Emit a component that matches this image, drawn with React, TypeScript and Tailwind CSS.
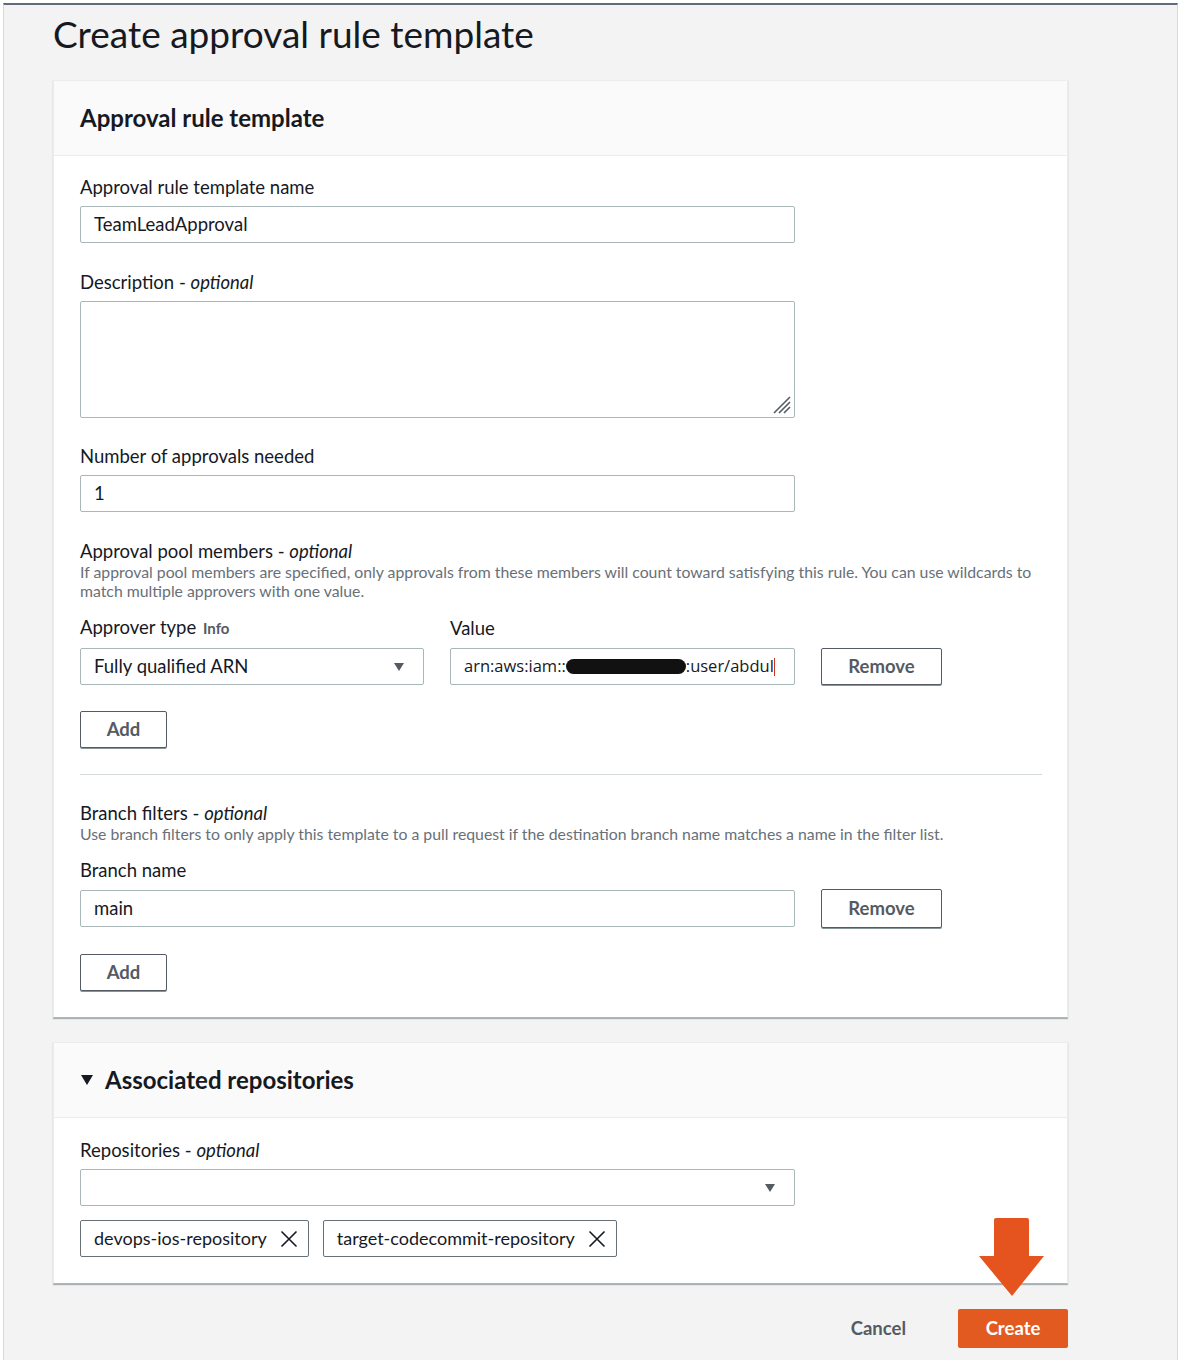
const Label = ({ text, optional }: { text: string; optional?: boolean }) => (
  <div className="text-[18.5px] leading-[22px] text-[#16191f]">
    {text}
    {optional && (
      <>
        {' - '}
        <i>optional</i>
      </>
    )}
  </div>
);

const TextInput = ({ value, className = '' }: { value: string; className?: string }) => (
  <div
    className={`h-[37px] border border-[#aab7b8] rounded-[2px] bg-white px-[13px] flex items-center text-[18.5px] text-[#16191f] ${className}`}
  >
    {value}
  </div>
);

const Caret = () => (
  <svg width="12" height="10" viewBox="0 0 12 10" className="shrink-0">
    <path d="M1 1h10L6 9z" fill="#545b64" />
  </svg>
);

const OutlineButton = ({ label, className = '' }: { label: string; className?: string }) => (
  <button
    className={`h-[37px] border border-[#545b64] rounded-[2px] bg-white font-bold text-[18.5px] text-[#545b64] shadow-[0_1px_0_#879596] ${className}`}
  >
    {label}
  </button>
);

const Token = ({ name }: { name: string }) => (
  <div className="h-[37px] border border-[#687078] rounded-[2px] bg-white pl-[13px] pr-[10px] flex items-center gap-[13px] text-[18px] text-[#16191f]">
    {name}
    <svg width="18" height="18" viewBox="0 0 18 18">
      <path d="M1.5 1.5l15 15M16.5 1.5l-15 15" stroke="#16191f" strokeWidth="1.6" />
    </svg>
  </div>
);

const Card = ({ children }: { children: React.ReactNode }) => (
  <section className="w-[1015px] bg-white border border-[#eaeded] border-b-[#aab7b8] shadow-[0_1px_1px_rgba(0,28,36,0.3)]">
    {children}
  </section>
);

const CardHeader = ({ children }: { children: React.ReactNode }) => (
  <div className="h-[75px] bg-[#fafafa] border-b border-[#eaeded] px-[26px] flex items-center text-[24px] font-bold text-[#16191f]">
    {children}
  </div>
);

export default function App() {
  return (
    <div className="w-[1181px] min-h-[1360px] bg-white pt-[3px] px-[3px] font-['Lato',sans-serif]">
      <div className="min-h-[1357px] bg-[#f3f3f3] border-t-2 border-t-[#5f6b7a] border-x border-x-[#d5dbdb] pl-[49px] pb-[12px]">
        <h1 className="pt-[9px] text-[37px] leading-[40px] text-[#16191f] font-normal">
          Create approval rule template
        </h1>

        <div className="mt-[26px] flex flex-col gap-[24px]">
          <Card>
            <CardHeader>Approval rule template</CardHeader>
            <div className="px-[26px] pt-[20px] pb-[26px] flex flex-col">
              <Label text="Approval rule template name" />
              <TextInput value="TeamLeadApproval" className="mt-[8px] w-[715px]" />

              <div className="mt-[28px]">
                <Label text="Description" optional />
              </div>
              <div className="relative mt-[8px] w-[715px] h-[117px] border border-[#aab7b8] rounded-[2px] bg-white">
                <svg width="22" height="22" viewBox="0 0 22 22" className="absolute right-[2px] bottom-[2px]">
                  <path d="M20 4L4 20M20 9L9 20M20 14L14 20" stroke="#545b64" strokeWidth="1.6" />
                </svg>
              </div>

              <div className="mt-[27px]">
                <Label text="Number of approvals needed" />
              </div>
              <TextInput value="1" className="mt-[8px] w-[715px]" />

              <div className="mt-[28px]">
                <Label text="Approval pool members" optional />
              </div>
              <p className="text-[15.8px] leading-[19px] text-[#687078] w-[962px]">
                If approval pool members are specified, only approvals from these members will count toward satisfying this rule. You can use wildcards to match multiple approvers with one value.
              </p>

              <div className="mt-[16px] flex items-end gap-[26px]">
                <div className="flex flex-col gap-[9px]">
                  <div className="text-[18.5px] leading-[22px] text-[#16191f]">
                    Approver type <span className="text-[15px] font-bold text-[#545b64] ml-[2px]">Info</span>
                  </div>
                  <div className="w-[344px] h-[37px] border border-[#aab7b8] rounded-[2px] bg-white pl-[13px] pr-[18px] flex items-center justify-between text-[18.5px] text-[#16191f]">
                    Fully qualified ARN
                    <Caret />
                  </div>
                </div>
                <div className="flex flex-col gap-[9px]">
                  <div className="text-[18.5px] leading-[22px] text-[#16191f]">Value</div>
                  <div className="w-[345px] h-[37px] border border-[#aab7b8] rounded-[2px] bg-white pl-[13px] flex items-center overflow-hidden whitespace-nowrap text-[16.5px] text-[#16191f] font-['Open_Sans',sans-serif]">
                    arn:aws:iam::
                    <span className="inline-block w-[120px] h-[15px] bg-[#111] rounded-full" />
                    :user/abdul
                    <span className="inline-block w-[1px] h-[18px] bg-[#d13212]" />
                  </div>
                </div>
                <OutlineButton label="Remove" className="w-[121px]" />
              </div>

              <OutlineButton label="Add" className="mt-[26px] w-[87px]" />

              <div className="mt-[26px] h-px w-[962px] bg-[#d5dbdb]" />

              <div className="mt-[27px]">
                <Label text="Branch filters" optional />
              </div>
              <p className="text-[15.8px] leading-[19px] text-[#687078]">
                Use branch filters to only apply this template to a pull request if the destination branch name matches a name in the filter list.
              </p>

              <div className="mt-[16px]">
                <Label text="Branch name" />
              </div>
              <div className="mt-[8px] flex items-center gap-[26px]">
                <TextInput value="main" className="w-[715px]" />
                <OutlineButton label="Remove" className="w-[121px] h-[39px]" />
              </div>

              <OutlineButton label="Add" className="mt-[26px] w-[87px]" />
            </div>
          </Card>

          <Card>
            <CardHeader>
              <svg width="14" height="12" viewBox="0 0 14 12" className="mr-[11px]">
                <path d="M1 1h12L7 11z" fill="#16191f" />
              </svg>
              Associated repositories
            </CardHeader>
            <div className="px-[26px] pt-[21px] pb-[26px] flex flex-col">
              <Label text="Repositories" optional />
              <div className="mt-[8px] w-[715px] h-[37px] border border-[#aab7b8] rounded-[2px] bg-white pr-[18px] flex items-center justify-end">
                <Caret />
              </div>
              <div className="mt-[14px] flex gap-[14px]">
                <Token name="devops-ios-repository" />
                <Token name="target-codecommit-repository" />
              </div>
            </div>
          </Card>
        </div>

        <div className="w-[1015px] mt-[25px] flex items-center justify-end gap-[52px]">
          <button className="text-[18.5px] font-bold text-[#545b64]">Cancel</button>
          <div className="relative">
            <button className="w-[110px] h-[39px] bg-[#e25a20] text-white font-bold text-[18.5px] rounded-[2px]">
              Create
            </button>
            <svg width="68" height="78" viewBox="0 0 68 78" className="absolute left-[20px] -top-[91px]">
              <path d="M16 2a2 2 0 0 1 2-2h31a2 2 0 0 1 2 2v36h15l-32 40L1 38h15z" fill="#e5541f" />
            </svg>
          </div>
        </div>
      </div>
    </div>
  );
}
